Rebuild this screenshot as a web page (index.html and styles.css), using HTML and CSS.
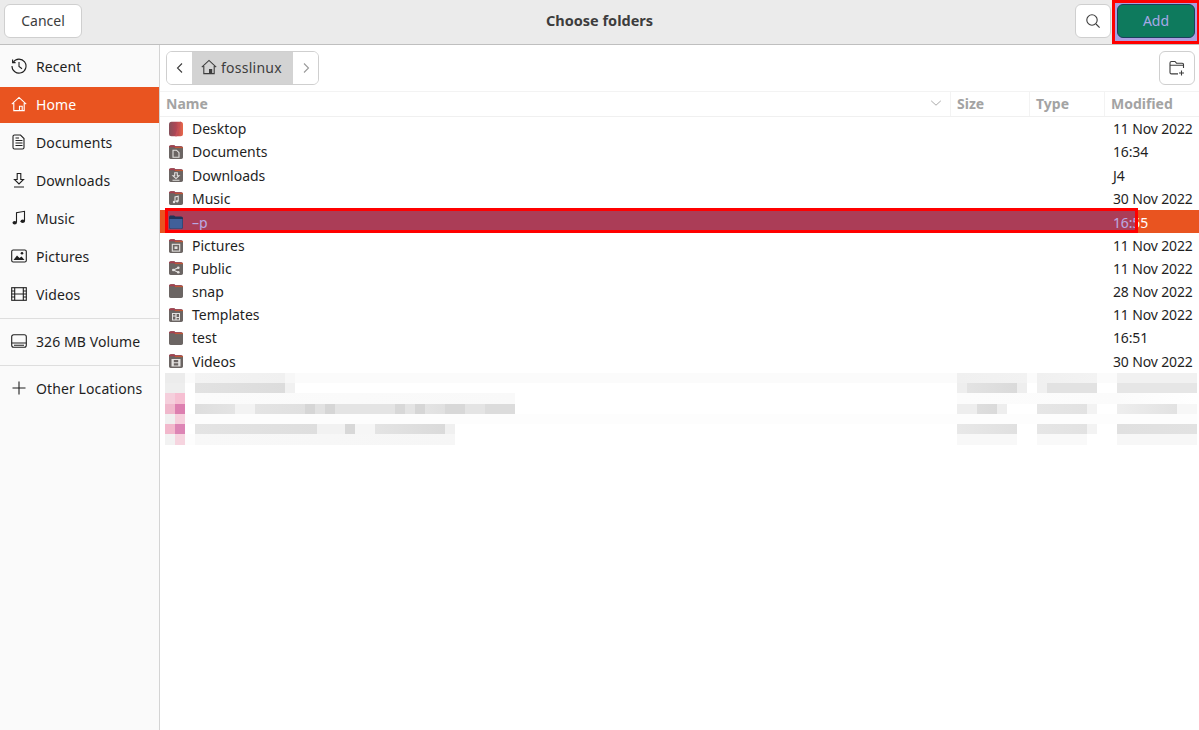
FILE: index.html
```html
<!DOCTYPE html>
<html lang="en">
<head>
<meta charset="utf-8">
<title>Choose folders</title>
<link rel="stylesheet" href="styles.css">
</head>
<body>
<svg class="defs" width="0" height="0" aria-hidden="true">
  <symbol id="folder" viewBox="0 0 16 16">
    <path d="M1 3C1 1.900 1.800 1.200 3 1.200h3.200l1.300 1.100H13c1.200 0 2 .7 2 1.700v9.200c0 1-.7 1.700-1.700 1.700H2.700c-1 0-1.700-.7-1.700-1.700z" fill="#6b6563"/>
    <path d="M1 3C1 1.900 1.800 1.200 3 1.200h3.200l1.300 1.100H13c1.200 0 2 .7 2 1.700H7L5.800 3.300H1z" fill="#a5404e"/>
    <path d="M7 3.300h8v.8H7z" fill="#c9602f"/>
  </symbol>
</svg>
<div class="app">
  <header class="titlebar">
    <button class="btn cancel">Cancel</button>
    <h1 class="title">Choose folders</h1>
    <div class="actions">
      <button class="btn search" aria-label="Search">
        <svg class="ico" viewBox="0 0 16 16"><circle cx="7" cy="7" r="5.200"/><path d="M11 11l3.600 3.600"/></svg>
      </button>
      <div class="add-mark"><button class="add">Add</button></div>
    </div>
  </header>
  <div class="main">
    <nav class="sidebar">
      <a class="place"><svg class="ico" viewBox="0 0 16 16"><path d="M2.200 4.200A7 7 0 1 1 1 8"/><path d="M1.600 1.600v3h3M8 4v4.400l3 2.400"/></svg>Recent</a>
      <a class="place active"><svg class="ico" viewBox="0 0 16 16"><path d="M.8 8.200 8 1.400l7.200 6.800M2.800 7v7.600h10.400V7M8.500 14.600v-4.400h2.700v4.400"/></svg>Home</a>
      <a class="place"><svg class="ico" viewBox="0 0 16 16"><path d="M3.500 1h6l3.500 3.500v9c0 .9-.6 1.500-1.500 1.500h-8C2.600 15 2 14.400 2 13.500v-11C2 1.600 2.600 1 3.500 1zM4.500 6.500h7M4.500 9h7M4.500 11.500h7M4.500 4h3.500"/></svg>Documents</a>
      <a class="place"><svg class="ico" viewBox="0 0 16 16"><path d="M6.200 1.500h3.600v6h2.700L8 12 3.500 7.500h2.700zM3 15h10"/></svg>Downloads</a>
      <a class="place"><svg class="ico" viewBox="0 0 16 16"><path d="M5.500 12.500V2.800l8-1.500v9.700" /><ellipse class="solid" cx="3.700" cy="12.700" rx="2.200" ry="1.800"/><ellipse class="solid" cx="11.700" cy="11.200" rx="2.200" ry="1.800"/></svg>Music</a>
      <a class="place"><svg class="ico" viewBox="0 0 16 16"><rect x=".7" y="2" width="14.600" height="12" rx="1.500"/><path class="solid" d="M2.500 12l3.500-4.500 2.500 2.500 2-1.500 3 3.500z"/><circle class="solid" cx="11" cy="5.300" r="1.300"/></svg>Pictures</a>
      <a class="place"><svg class="ico" viewBox="0 0 16 16"><rect x=".7" y="1.700" width="14.600" height="12.600"/><path d="M3.700 1.700v12.600M12.300 1.700v12.600M3.700 8h8.600M.7 5h3M.7 8h3M.7 11h3M12.300 5h3M12.300 8h3M12.300 11h3"/></svg>Videos</a>
      <hr class="sep">
      <a class="place"><svg class="ico" viewBox="0 0 16 16"><rect x=".7" y="1.700" width="14.600" height="12.600" rx="2"/><path d="M.7 10h14.600M3 12.200h10"/></svg>326 MB Volume</a>
      <hr class="sep">
      <a class="place"><svg class="ico" viewBox="0 0 16 16"><path d="M8 1.500v13M1.500 8h13"/></svg>Other Locations</a>
    </nav>
    <section class="browser">
      <div class="toolbar">
        <div class="pathbar">
          <button class="nav" aria-label="Back"><svg class="ico" viewBox="0 0 16 16"><path d="M10 3.500 5.500 8l4.500 4.500"/></svg></button>
          <div class="crumb"><svg class="ico" viewBox="0 0 16 16"><path d="M.8 8.200 8 1.400l7.200 6.800M2.800 7v7.600h10.400V7"/><path class="solid" d="M8 10h3.200v4.600H8z"/></svg>fosslinux</div>
          <button class="nav next" aria-label="Forward"><svg class="ico" viewBox="0 0 16 16"><path d="M6 3.500 10.500 8 6 12.500"/></svg></button>
        </div>
        <button class="btn newfolder" aria-label="New folder"><svg class="ico" viewBox="0 0 16 16"><path d="M14.500 8V4.500c0-.8-.5-1.300-1.300-1.300H7.500L6 1.500H2.500C1.500 1.500 1 2 1 3v9.500c0 .9.500 1.400 1.500 1.400H9"/><path d="M1 5.200h13M12.500 10.500v5M10 13h5"/></svg></button>
      </div>
      <div class="thead">
        <div class="th name">Name<svg class="ico sort" viewBox="0 0 16 16"><path d="M2.500 5.500 8 10.500l5.500-5"/></svg></div>
        <div class="th">Size</div>
        <div class="th">Type</div>
        <div class="th">Modified</div>
      </div>
      <div class="row"><svg class="fi" viewBox="0 0 16 16"><defs><linearGradient id="desk" x1="0" x2="1" y1="0" y2="0"><stop offset="0" stop-color="#84505a"/><stop offset=".5" stop-color="#b04656"/><stop offset="1" stop-color="#e8684a"/></linearGradient></defs><rect x="1" y=".8" width="14" height="14.400" rx="2.500" fill="url(#desk)"/><path d="M7 15.200 12 .8h1L9 15.200z" fill="#c4505a"/></svg><span class="fname">Desktop</span><span class="date">11 Nov 2022</span></div>
      <div class="row"><svg class="fi" viewBox="0 0 16 16"><use href="#folder"/><path class="em" d="M5 6.200h3.500L11 8.700v4.600H5z"/></svg><span class="fname">Documents</span><span class="date">16:34</span></div>
      <div class="row"><svg class="fi" viewBox="0 0 16 16"><use href="#folder"/><path class="em" d="M6.700 5.800h2.600v3h1.700L8 11.600 5 8.800h1.700zM4.500 13.200h7"/></svg><span class="fname">Downloads</span><span class="date">J4</span></div>
      <div class="row"><svg class="fi" viewBox="0 0 16 16"><use href="#folder"/><path class="em" d="M7 12V7l3.200-.8V11"/><circle class="emf" cx="6" cy="12" r="1.200"/><circle class="emf" cx="9.200" cy="11.300" r="1.200"/></svg><span class="fname">Music</span><span class="date">30 Nov 2022</span></div>
      <div class="row selected"><svg class="fi over" viewBox="0 0 16 16"><path d="M1 3.200C1 2 1.800 1.400 3 1.400h3l1.400 1.200H13c1.200 0 2 .7 2 1.800v8.800c0 1-.7 1.600-1.700 1.600H2.700c-1 0-1.700-.6-1.700-1.600z" fill="#1e3458"/><path d="M1.500 5h13v8.200c0 .8-.5 1.200-1.200 1.200H2.700c-.7 0-1.200-.4-1.200-1.200z" fill="#40609a"/></svg><span class="fname">–p</span><span class="date">16:55</span><div class="mark"></div></div>
      <div class="row shifted"><svg class="fi" viewBox="0 0 16 16"><use href="#folder"/><rect class="em" x="4.300" y="6.300" width="7.400" height="6.800"/><rect class="emf" x="6.500" y="8.400" width="3" height="2.600"/></svg><span class="fname">Pictures</span><span class="date">11 Nov 2022</span></div>
      <div class="row"><svg class="fi" viewBox="0 0 16 16"><use href="#folder"/><path class="em" d="M5.500 10 10 7.800M5.500 10 10 12.300"/><circle class="emf" cx="5.300" cy="10" r="1.300"/><circle class="emf" cx="10.300" cy="7.700" r="1.300"/><circle class="emf" cx="10.300" cy="12.300" r="1.300"/></svg><span class="fname">Public</span><span class="date">11 Nov 2022</span></div>
      <div class="row"><svg class="fi" viewBox="0 0 16 16"><use href="#folder"/></svg><span class="fname">snap</span><span class="date">28 Nov 2022</span></div>
      <div class="row"><svg class="fi" viewBox="0 0 16 16"><use href="#folder"/><rect class="emf" x="4" y="6" width="8" height="7.500"/><path class="emd" d="M5 7h2.400v1.500H5zM5 9.500h2.400v3H5zM8.600 7H11v3H8.600zM8.600 11H11v1.500H8.600z"/></svg><span class="fname">Templates</span><span class="date">11 Nov 2022</span></div>
      <div class="row"><svg class="fi" viewBox="0 0 16 16"><use href="#folder"/></svg><span class="fname">test</span><span class="date">16:51</span></div>
      <div class="row"><svg class="fi" viewBox="0 0 16 16"><use href="#folder"/><rect class="emf" x="3.500" y="6" width="9" height="7.500"/><path class="emd" d="M5.800 7h4.400v2.300H5.800zM5.800 10.200h4.400v2.300H5.800z"/></svg><span class="fname">Videos</span><span class="date">30 Nov 2022</span></div>
      <div class="mosaic" aria-hidden="true">
        <div class="strip s1"></div>
        <div class="strip s2"></div>
        <div class="strip s3"></div>
        <div class="strip s4"></div>
        <div class="strip s5"></div>
        <div class="strip s6"></div>
        <div class="strip s7"></div>
      </div>
    </section>
  </div>
</div>
</body>
</html>
```
FILE: styles.css
```css
* { box-sizing: border-box; }
html, body { margin: 0; height: 100%; }
body {
  font-family: "Noto Sans", "Open Sans", sans-serif;
  font-size: 14px;
  color: #241f1f;
  background: #fff;
  overflow: hidden;
}
.defs { display: block; height: 0; }
.app { display: flex; flex-direction: column; height: 730px; }
.ico {
  width: 16px;
  height: 16px;
  fill: none;
  stroke: currentColor;
  stroke-width: 1.100;
  flex: none;
}
.ico .solid { fill: currentColor; stroke: none; }

.titlebar {
  flex: none;
  height: 45px;
  display: flex;
  align-items: flex-start;
  justify-content: space-between;
  padding-left: 4px;
  background: #ebebeb;
  border-bottom: 1px solid #bfbfbf;
  position: relative;
}
.title {
  position: absolute;
  left: 0;
  right: 0;
  top: 10px;
  margin: 0;
  text-align: center;
  font-size: 14.500px;
  line-height: 20px;
  font-weight: 700;
  color: #3d3d3d;
}
.btn {
  font: inherit;
  color: #3d3d3d;
  background: #fff;
  border: 1px solid #cfcfcf;
  border-radius: 6px;
  padding: 0;
  display: flex;
  align-items: center;
  justify-content: center;
}
.cancel { width: 78px; height: 34px; margin-top: 4px; padding-bottom: 2px; }
.actions { display: flex; align-items: flex-start; position: relative; z-index: 1; }
.search { width: 36px; height: 34px; margin-top: 4px; margin-right: 1px; }
.add-mark {
  width: 87px;
  height: 44px;
  padding: 1px 2px 3px;
  background: #ab9fe0;
  border: 3px solid #f00;
  border-right-width: 2px;
}
.add {
  display: block;
  width: 100%;
  height: 100%;
  margin: 0;
  padding: 0 0 2px;
  font: inherit;
  color: #a8a8e8;
  background: #0e7a5d;
  border: 1px solid #1c3f5e;
  border-radius: 6px;
}

.main { flex: 1; display: flex; min-height: 0; }
.sidebar {
  flex: none;
  width: 160px;
  padding-top: 4px;
  background: #fafafa;
  border-right: 1px solid #d4d4d4;
  display: flex;
  flex-direction: column;
  gap: 2px;
}
.place {
  height: 36px;
  display: flex;
  align-items: center;
  gap: 9px;
  padding: 0 0 2px 11px;
  color: #1f1f1f;
  white-space: nowrap;
  letter-spacing: .1px;
}
.place.active { background: #e95420; color: #fff; }
.sep { width: 100%; height: 1px; margin: 3px 0; border: 0; background: #dedede; }

.browser { flex: 1; min-width: 0; }
.toolbar {
  height: 47px;
  padding: 6px 4px 0 6px;
  display: flex;
  align-items: flex-start;
  justify-content: space-between;
  border-bottom: 1px solid #f3f3f3;
}
.pathbar {
  width: 153px;
  height: 34px;
  display: flex;
  border: 1px solid #cfcfcf;
  border-radius: 6px;
  overflow: hidden;
  background: #fff;
}
.nav {
  flex: none;
  width: 25px;
  padding: 0;
  border: 0;
  background: #fff;
  color: #3d3d3d;
  display: flex;
  align-items: center;
  justify-content: center;
}
.nav.next { color: #9a9a9a; }
.crumb {
  flex: 1;
  display: flex;
  align-items: center;
  gap: 4px;
  padding: 0 0 2px 9px;
  background: #d3d3d3;
  color: #3d3d3d;
  letter-spacing: .25px;
}
.newfolder { width: 36px; height: 34px; }

.thead {
  height: 25px;
  display: grid;
  grid-template-columns: 790px 79px 75px 1fr;
  border-bottom: 1px solid #f0f0f0;
  color: #a3a3a3;
  font-weight: 700;
}
.th {
  display: flex;
  align-items: center;
  padding: 0 0 2px 6px;
  border-left: 1px solid #f3f3f3;
}
.th.name { padding: 0 6px 2px; border-left: 0; justify-content: space-between; }
.sort { width: 14px; height: 14px; color: #a8a8a8; margin-right: 1px; }

.row {
  height: 23.250px;
  display: flex;
  align-items: center;
  padding-left: 8px;
  position: relative;
  color: #1f1f1f;
}
.fi { width: 16px; height: 16px; flex: none; margin-right: 8px; }
.fname { flex: 1; }
.date { width: 86px; white-space: nowrap; letter-spacing: -.15px; }
.em { fill: none; stroke: #e4e2e0; stroke-width: 1.100; }
.emf { fill: #e4e2e0; }
.emd { fill: #6b6563; }
.shifted { padding-top: 2px; }
.selected { background: #e95420; color: #fff; padding-top: 1px; }
.fi.over { position: relative; z-index: 2; }
.mark {
  position: absolute;
  left: 5px;
  top: -2px;
  width: 973px;
  height: 25px;
  background: rgba(65, 22, 183, .37);
  border: 3px solid #f00;
}

.mosaic { height: 72px; display: flex; flex-direction: column; }
.strip { flex: 1; background-repeat: no-repeat; }
.s1 { background-image: linear-gradient(90deg, #fff 5px, #ececec 5px, #ececec 25px, #fbfbfb 25px, #fbfbfb 35px, #f3f3f3 35px, #f0f0f0 125px, #f7f7f7 125px, #f7f7f7 135px, #fbfbfb 135px, #fbfbfb 797px, #f0f0f0 797px, #f2f2f2 867px, #fbfbfb 867px, #fbfbfb 877px, #f0f0f0 877px, #f3f3f3 937px, #fbfbfb 937px, #fbfbfb 957px, #f1f1f1 957px, #f1f1f1 1037px, #fff 1037px); }
.s2 { background-image: linear-gradient(90deg, #fff 5px, #eeeeee 5px, #eeeeee 25px, #fff 25px, #fff 35px, #e2e2e2 35px, #dcdcdc 125px, #f1f1f1 125px, #f1f1f1 135px, #fff 135px, #fff 797px, #eeeeee 797px, #eeeeee 807px, #e3e3e3 807px, #dadada 857px, #eeeeee 857px, #eeeeee 867px, #fff 867px, #fff 877px, #f0f0f0 877px, #f0f0f0 887px, #e2e2e2 887px, #e2e2e2 937px, #fff 937px, #fff 957px, #e6e6e6 957px, #e6e6e6 1037px, #fff 1037px); }
.s3 { background-image: linear-gradient(90deg, #fff 5px, #f5cfdc 5px, #f5cfdc 15px, #f6bfd2 15px, #f6bfd2 25px, #fff 25px, #fff 35px, #fbfbfb 35px, #f9f9f9 355px, #fff 355px, #fff 797px, #fcfcfc 797px, #fbfbfb 957px, #fff 1037px); }
.s4 { background-image: linear-gradient(90deg, #fff 5px, #f0b8cc 5px, #f0b8cc 15px, #dd7fb0 15px, #dd7fb0 25px, #fff 25px, #fff 35px, #dedede 35px, #e4e4e4 75px, #f3f3f3 75px, #f3f3f3 95px, #e4e4e4 95px, #e0e0e0 145px, #d6d6d6 145px, #d6d6d6 155px, #e2e2e2 155px, #e2e2e2 165px, #d6d6d6 165px, #d6d6d6 175px, #e4e4e4 175px, #e4e4e4 235px, #d8d8d8 235px, #d8d8d8 245px, #e4e4e4 245px, #e4e4e4 255px, #d6d6d6 255px, #d6d6d6 265px, #e4e4e4 265px, #e0e0e0 285px, #d8d8d8 285px, #d8d8d8 305px, #e4e4e4 305px, #e4e4e4 325px, #dcdcdc 325px, #dcdcdc 355px, #fff 355px, #fff 797px, #eeeeee 797px, #eeeeee 817px, #dedede 817px, #dadada 837px, #eeeeee 837px, #eeeeee 847px, #fff 847px, #fff 877px, #e6e6e6 877px, #e2e2e2 927px, #f3f3f3 927px, #f3f3f3 937px, #fff 937px, #fff 957px, #eeeeee 957px, #e2e2e2 1017px, #f7f7f7 1017px, #f7f7f7 1037px, #fff 1037px); }
.s5 { background-image: linear-gradient(90deg, #fff 5px, #f0f0f0 5px, #f0f0f0 15px, #f6cfdc 15px, #f6cfdc 25px, #fdfdfd 25px, #fdfdfd 1037px, #fff 1037px); }
.s6 { background-image: linear-gradient(90deg, #fff 5px, #f2b8cc 5px, #f2b8cc 15px, #dd85b5 15px, #dd85b5 25px, #fff 25px, #fff 35px, #e4e4e4 35px, #dedede 157px, #f2f2f2 157px, #f2f2f2 185px, #d8d8d8 185px, #d8d8d8 195px, #f6f6f6 195px, #f6f6f6 215px, #e4e4e4 215px, #dadada 285px, #f0f0f0 285px, #f0f0f0 295px, #fff 295px, #fff 797px, #e8e8e8 797px, #e0e0e0 857px, #fff 857px, #fff 877px, #e6e6e6 877px, #e2e2e2 927px, #f3f3f3 927px, #f3f3f3 937px, #fff 937px, #fff 957px, #e0e0e0 957px, #e2e2e2 1037px, #fff 1037px); }
.s7 { background-image: linear-gradient(90deg, #fff 5px, #f2f2f2 5px, #f2f2f2 15px, #f6d4df 15px, #f6d4df 25px, #fdfdfd 25px, #fdfdfd 35px, #f8f8f8 35px, #f6f6f6 295px, #fff 295px, #fff 797px, #f8f8f8 797px, #f8f8f8 857px, #fff 857px, #fff 877px, #f9f9f9 877px, #f9f9f9 927px, #fff 927px, #fff 957px, #f7f7f7 957px, #f7f7f7 1037px, #fff 1037px); }
```
